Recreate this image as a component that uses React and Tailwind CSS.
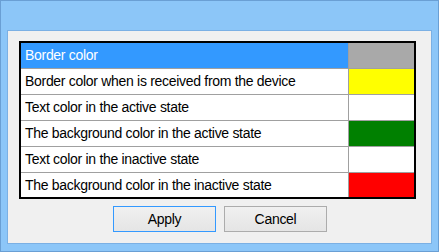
import React from 'react'

const rows = [
  { label: 'Border color', color: 'bg-[#a9a9a9]' },
  { label: 'Border color when is received from the device', color: 'bg-[#ffff00]' },
  { label: 'Text color in the active state', color: 'bg-white' },
  { label: 'The background color in the active state', color: 'bg-[#008000]' },
  { label: 'Text color in the inactive state', color: 'bg-white' },
  { label: 'The background color in the inactive state', color: 'bg-[#ff0000]' },
]

function ColorRow({ label, color, selected, last }) {
  return (
    <div className={`flex ${last ? 'h-[24px]' : 'h-[26px] border-b border-[#a0a0a0]'}`}>
      <div
        className={`w-[328px] flex items-center pl-[4px] border-r border-[#a0a0a0] ${
          selected ? 'bg-[#3399ff] text-white' : 'bg-white text-black'
        }`}
      >
        {label}
      </div>
      <div className={`flex-1 ${color}`}></div>
    </div>
  )
}

export default function App() {
  return (
    <div
      className="w-[439px] h-[252px] bg-[#8cc6f8] border border-[#6a9fd4] pt-[29px] px-[6px] pb-[7px] text-[14px] tracking-[-0.3px]"
      style={{ fontFamily: '"Liberation Sans", Arial, sans-serif' }}
    >
      <div className="h-full border border-[#7bb0e4] bg-[#f0f0f0] pt-[10px] pl-[11px] flex flex-col">
        <div className="w-[397px] h-[158px] border-2 border-black">
          {rows.map((r, i) => (
            <ColorRow key={i} {...r} selected={i === 0} last={i === rows.length - 1} />
          ))}
        </div>
        <div className="flex gap-[8px] mt-[7px] pl-[94px]">
          <button className="w-[103px] h-[26px] border border-[#3399ff] bg-gradient-to-b from-[#f0f0f0] to-[#e5e5e5] text-black">
            Apply
          </button>
          <button className="w-[103px] h-[26px] border border-[#acacac] bg-gradient-to-b from-[#f0f0f0] to-[#e5e5e5] text-black">
            Cancel
          </button>
        </div>
      </div>
    </div>
  )
}
